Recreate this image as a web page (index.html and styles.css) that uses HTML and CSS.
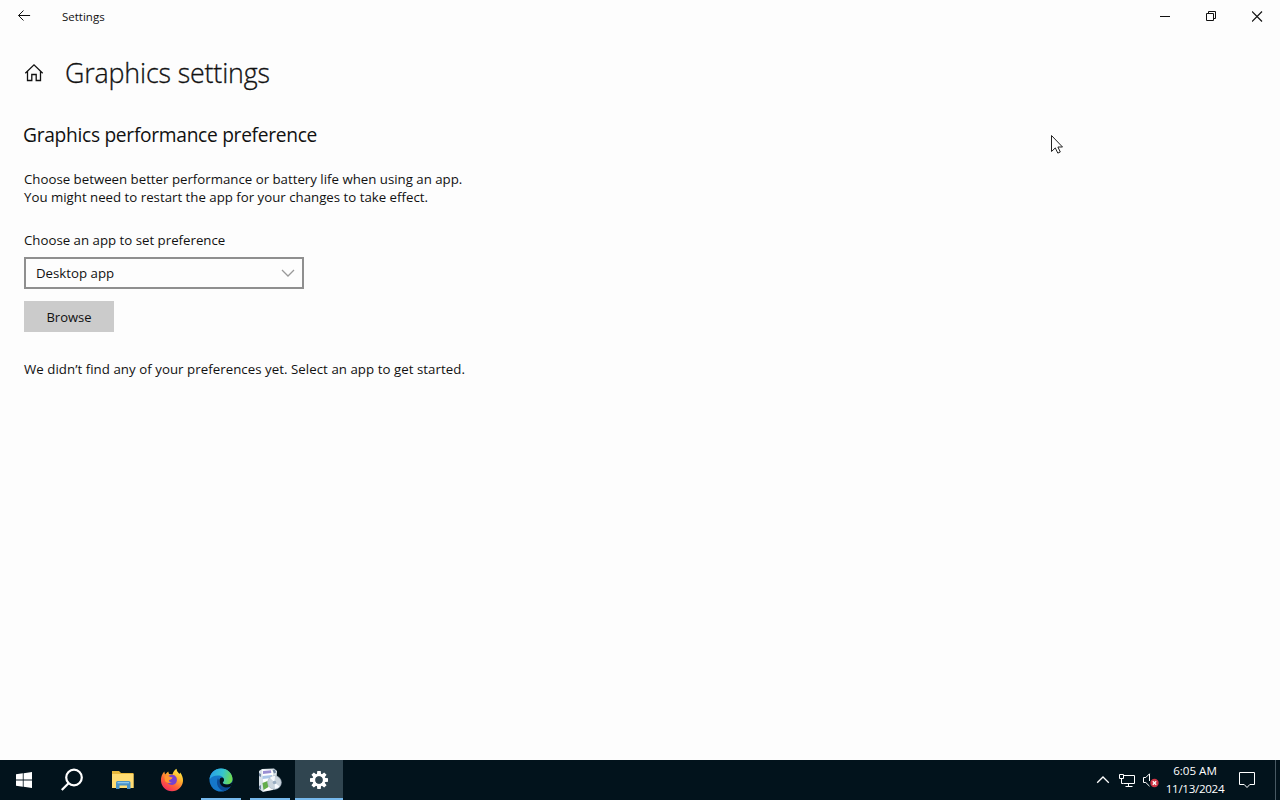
FILE: index.html
```html
<!DOCTYPE html>
<html lang="en">
<head>
    <meta charset="UTF-8">
    <meta name="viewport" content="width=device-width, initial-scale=1.0">
    <title>Settings</title>
    <link rel="stylesheet" href="styles.css">
</head>
<body>
    <div class="window">
        <header class="titlebar">
            <button class="back" aria-label="Back">
                <svg width="14" height="12" viewBox="0 0 14 12"><path d="M6.500 .5L1.500 5.500l5 5M1.500 5.500h11.600"/></svg>
            </button>
            <span class="app-name">Settings</span>
            <div class="window-controls">
                <button aria-label="Minimize">
                    <svg width="11" height="11" viewBox="0 0 11 11"><path d="M0 5.500h10"/></svg>
                </button>
                <button aria-label="Restore">
                    <svg width="11" height="11" viewBox="0 0 11 11"><path d="M.5 2.500h7v7h-7zM2.500 2.500v-2h7v7h-2"/></svg>
                </button>
                <button aria-label="Close">
                    <svg width="11" height="11" viewBox="0 0 11 11"><path d="M0 .5l10 10M10 .5l-10 10" stroke-width="1.200"/></svg>
                </button>
            </div>
        </header>

        <main class="content">
            <div class="page-title">
                <svg width="20" height="20" viewBox="0 0 20 20"><path d="M1.300 10.300L10 1.800l8.700 8.500M3.500 8.500v9h4.300v-6h4.400v6h4.300v-9"/></svg>
                <h1>Graphics settings</h1>
            </div>
            <h2>Graphics performance preference</h2>
            <p class="intro">Choose between better performance or battery life when using an app.<br>You might need to restart the app for your changes to take effect.</p>
            <p class="label">Choose an app to set preference</p>
            <div class="dropdown">
                <span>Desktop app</span>
                <svg width="14" height="8" viewBox="0 0 14 8"><path d="M1 1l6 6 6-6"/></svg>
            </div>
            <button class="browse">Browse</button>
            <p class="empty">We didn’t find any of your preferences yet. Select an app to get started.</p>
        </main>
    </div>

    <footer class="taskbar">
        <div class="start">
            <svg width="16" height="16" viewBox="0 0 16 16" fill="#fff"><path d="M0 2.200L6.800 1.300v6.300H0zM7.600 1.200L16 0v7.600H7.600zM0 8.400h6.800v6.300L0 13.800zM7.600 8.400H16V16l-8.400-1.200z"/></svg>
        </div>
        <div class="start">
            <svg width="24" height="24" viewBox="0 0 24 24" fill="none" stroke="#fff" stroke-width="2.200"><circle cx="14" cy="9.500" r="7.800"/><path d="M8.500 15.200L1.800 22"/></svg>
        </div>
        <div class="apps">
            <div class="task">
                <svg width="24" height="22" viewBox="0 0 24 22">
                    <path fill="#e9b93c" d="M1 2h7l2 2h12.500v15H1z"/>
                    <path fill="#ffdc73" d="M1 5h21.500v14H1z"/>
                    <path fill="#4a93c8" d="M5 13.500q0-1.500 1.500-1.500h11.500q1.500 0 1.500 1.500V20h-3.500v-3.500H8.500V20H5z"/>
                    <path fill="#8cc8ee" d="M6.500 13h11.500v1.300h-11.500z"/>
                </svg>
            </div>
            <div class="task">
                <svg width="24" height="24" viewBox="0 0 24 24">
                    <defs>
                        <linearGradient id="flame" x1=".85" y1="0" x2=".2" y2="1">
                            <stop offset="0" stop-color="#fff04a"/>
                            <stop offset=".35" stop-color="#ffb52e"/>
                            <stop offset=".65" stop-color="#ff6238"/>
                            <stop offset="1" stop-color="#ef2466"/>
                        </linearGradient>
                    </defs>
                    <path fill="url(#flame)" d="M1 13C.7 9 2 6 4.300 3.500l.7 3 3.200-3L9 6l3.500.5C13 4 14.500 2 16.500.7c.3 2.500 1.500 3.600 3 5.200l.7-1.300c2 2.800 3 5.400 2.800 8.400-.5 6-5 10.200-11 10.200S1.500 19 1 13z"/>
                    <path fill="#7542cf" d="M8 8.500c1.600-2.300 6.500-2.800 8.300.8 1.700 3.500-.3 7.700-4.300 7.700-3 0-5.100-2-5-4.700l3.600-.8 1.700-1.500z"/>
                    <path fill="#ff9830" d="M4.500 8.500c2-1 4.600-.4 5.800.5l2.400.5c-.3 1.400-2.800 1.700-3.500 2.600-.5 1.300.5 2.600 2.600 2-2 1.800-6.300 1-7-1.800z"/>
                </svg>
            </div>
            <div class="task open">
                <svg width="24" height="24" viewBox="0 0 24 24">
                    <defs>
                        <linearGradient id="wave" x1="0" y1=".3" x2="1" y2=".5">
                            <stop offset="0" stop-color="#289fe8"/>
                            <stop offset=".55" stop-color="#35c4cf"/>
                            <stop offset="1" stop-color="#72dc4b"/>
                        </linearGradient>
                    </defs>
                    <circle cx="12" cy="12" r="11.500" fill="#1577c9"/>
                    <path fill="#0c4b96" d="M9 10c-3 6 1 12 6 13 3-.7 5.500-2.300 7-4.700-5 2.500-11 .4-11.500-4.800z"/>
                    <path fill="url(#wave)" d="M.5 11.500C1 5 6 .5 12 .5c6.500 0 11.500 5 11.500 10.500 0 3.500-2.500 5.500-5.500 5.500-3 0-4.500-1-4.200-1.900.3-.7 1.200-1.200 1.200-2.600C15 9.500 12.500 7.500 9 7.500c-4 0-7 1.500-8.500 4z"/>
                    <path fill="#03101a" d="M10.500 12.500c0-2 1-3 2.500-3 1.300 0 2 1 2 2.500 0 1.400-.9 1.900-1.200 2.600-.3.900 1.200 1.900 4.200 1.900 2.200 0 4.200-.9 5.200-2.700-.1 2-.7 3.500-1.500 4.700-5 2.500-11.200.3-11.200-6z"/>
                </svg>
            </div>
            <div class="task open">
                <svg width="26" height="25" viewBox="0 0 26 25">
                    <path fill="#d9e2e8" d="M2 3l3-2 12-.5 3 2.500-1 18-13 3-4-3z"/>
                    <path fill="#fff" d="M5 1.500l11 .5v20l-9 1z"/>
                    <path fill="#9a8fd2" d="M6 3l8-.7.3 2.700L6 6z"/>
                    <path fill="#a9c6e8" d="M5.500 8l9.500-1v3l-9.500 1z"/>
                    <path fill="#65ad4c" d="M5.500 15l5-2 1 6-5 3z"/>
                    <path fill="#7186a0" d="M2 5l2 1v3l-2-1zM15.500 2l2.500-.5 1 3-2 1zM2 18l2-1v5l-2-2z"/>
                    <circle cx="17.500" cy="14.500" r="6.800" fill="#cbd5de" stroke="#a9b7c5" stroke-width=".7"/>
                    <path fill="#f7faff" d="M17.500 14.500L13 9.700a6.500 6.500 0 0 1 5-1.600zM17.500 14.500l5 4a6.500 6.500 0 0 1-4.500 2.200z"/>
                    <circle cx="17.500" cy="14.500" r="1.800" fill="#9aadc2"/>
                </svg>
            </div>
            <div class="task open active">
                <svg width="20" height="20" viewBox="0 0 20 20">
                    <g fill="#fff">
                        <path d="M8.300 1h3.400l.5 4H7.800zM8.300 19h3.400l.5-4H7.800zM1 8.300v3.400l4 .5V7.800zM19 8.300v3.400l-4 .5V7.800z"/>
                        <path transform="rotate(45 10 10)" d="M8.300 1h3.400l.5 4H7.800zM8.300 19h3.400l.5-4H7.800zM1 8.300v3.400l4 .5V7.800zM19 8.300v3.400l-4 .5V7.800z"/>
                    </g>
                    <circle cx="10" cy="10" r="5" fill="none" stroke="#fff" stroke-width="3"/>
                    <circle cx="10" cy="10" r="3.700" fill="#304550"/>
                </svg>
            </div>
        </div>
        <div class="tray">
            <svg class="chevron" width="14" height="8" viewBox="0 0 14 8"><path d="M1.200 6.800L7 1l5.800 5.800" stroke-width="1.300"/></svg>
            <svg class="network" width="18" height="16" viewBox="0 0 18 16"><path d="M5.500 3.500h11v8h-11M1.500 2.500h4v4h-4zM3.500 6.500v5h2M10.500 11.500v3M7.500 14.500h7"/></svg>
            <svg class="volume" width="18" height="16" viewBox="0 0 18 16"><path d="M7.500 9V1.800L3.800 5.500H1.500v5h2.300l3.700 3.700"/><circle cx="12.500" cy="11" r="4.200" fill="#cf3544" stroke="none"/><path d="M10.800 9.300l3.400 3.400M14.200 9.300l-3.400 3.400" stroke-width="1.300"/></svg>
            <div class="clock">
                <span class="time">6:05 AM</span>
                <span class="date">11/13/2024</span>
            </div>
            <svg class="messages" width="18" height="18" viewBox="0 0 18 18"><path d="M1.500 1.500h15v12h-4.700L9 16.500l-2.800-3H1.500z"/></svg>
            <span class="show-desktop"></span>
        </div>
    </footer>

    <svg class="cursor" width="14" height="22" viewBox="0 0 14 22"><path d="M1.500 1.500v16l3.800-3.600 2.500 5.200 2.500-1.100-2.400-5h4.600z"/></svg>
</body>
</html>
```

FILE: styles.css
```css
* {
    box-sizing: border-box;
}
body {
    margin: 0;
    height: 100vh;
    display: flex;
    flex-direction: column;
    overflow: hidden;
    background-color: #fdfdfd;
    color: #111;
    font-family: "Open Sans", "Noto Sans", sans-serif;
    font-size: 13.25px;
}
button {
    padding: 0;
    border: none;
    background: none;
    color: inherit;
    font: inherit;
}
svg {
    display: block;
    flex: none;
}
h1, h2, p {
    margin: 0;
    font-weight: 400;
    white-space: nowrap;
}
.window {
    flex: 1;
}
.titlebar {
    height: 32px;
    display: flex;
    align-items: center;
    fill: none;
    stroke: #111;
}
.back {
    width: 48px;
    display: flex;
    justify-content: center;
}
.app-name {
    margin-left: 14px;
    font-size: 11.5px;
}
.window-controls {
    margin-left: auto;
    display: flex;
}
.window-controls button {
    width: 46px;
    height: 32px;
    display: grid;
    place-items: center;
}
.content {
    padding: 17px 24px 0;
}
.page-title {
    height: 47px;
    display: flex;
    align-items: center;
    gap: 21px;
}
.page-title svg {
    fill: none;
    stroke: #111;
    stroke-width: 1.3;
}
h1 {
    padding-bottom: 1px;
    font-size: 26.8px;
    font-weight: 300;
    letter-spacing: -0.15px;
    -webkit-text-stroke: 0.3px #111;
}
h2 {
    margin-top: 25px;
    margin-left: -1px;
    font-size: 19.2px;
    line-height: 28px;
    letter-spacing: -0.3px;
}
.intro {
    margin-top: 21px;
    line-height: 18px;
}
.label {
    margin-top: 25px;
    line-height: 18px;
}
.dropdown {
    width: 280px;
    height: 32px;
    margin-top: 8px;
    padding: 0 7px 0 10px;
    display: flex;
    align-items: center;
    justify-content: space-between;
    border: 2px solid #8f8f8f;
}
.dropdown svg {
    fill: none;
    stroke: #999;
    stroke-width: 1.3;
}
.browse {
    display: block;
    width: 90px;
    height: 31px;
    margin-top: 12px;
    background-color: #cbcbcb;
    font-size: 13px;
}
.empty {
    margin-top: 28px;
    line-height: 18px;
    letter-spacing: 0.05px;
}
.taskbar {
    height: 40px;
    display: flex;
    background-color: #02131c;
    color: #fff;
}
.start, .task {
    width: 48px;
    height: 40px;
    display: grid;
    place-items: center;
}
.apps {
    display: flex;
    gap: 1px;
    margin-left: 3px;
}
.open {
    background: linear-gradient(#76b9ed, #76b9ed) center bottom / 40px 2px no-repeat;
}
.active {
    background-size: 48px 2px;
    background-color: #304550;
}
.tray {
    margin-left: auto;
    display: flex;
    align-items: center;
    fill: none;
    stroke: #fff;
}
.network {
    margin-left: 8px;
}
.volume {
    margin-left: 6px;
}
.clock {
    width: 60px;
    margin-left: 5px;
    display: flex;
    flex-direction: column;
    align-items: center;
    font-size: 11.6px;
    line-height: 18px;
}
.date {
    letter-spacing: -0.3px;
}
.messages {
    margin-left: 13px;
}
.show-desktop {
    width: 5px;
    height: 40px;
    margin-left: 19px;
    border-left: 1px solid #485963;
}
.cursor {
    position: absolute;
    left: 1050px;
    top: 134px;
    fill: #fff;
    stroke: #222;
}
```
